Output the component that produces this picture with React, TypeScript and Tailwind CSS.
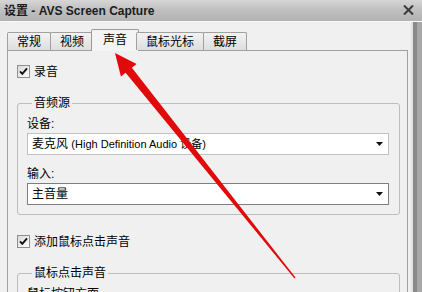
import React from "react";

const tabs = ["常规", "视频", "声音", "鼠标光标", "截屏"];

const CheckBox = () => (
  <span className="w-[13px] h-[13px] shrink-0 border border-[#8e8f8f] bg-[linear-gradient(135deg,#d9d9d9,#ffffff)] flex items-center justify-center">
    <svg width="11" height="11" viewBox="0 0 11 11">
      <path d="M2 5.3 L4.3 7.8 L9 2.4" fill="none" stroke="#111" strokeWidth="1.9" />
    </svg>
  </span>
);

const Select = ({ value, focused }: { value: React.ReactNode; focused?: boolean }) => (
  <div
    className={`h-[22px] bg-white border flex items-center pl-[4px] pr-[5px] ${
      focused ? "border-[#7e7e7e]" : "border-[#c2c2c2]"
    }`}
  >
    <span className="flex-1 whitespace-nowrap leading-[14px]">{value}</span>
    <svg width="7" height="4" viewBox="0 0 7 4">
      <path d="M0 0 H7 L3.5 4 Z" fill="#111" />
    </svg>
  </div>
);

const GroupBox = ({ title, children, className = "" }: { title: string; children: React.ReactNode; className?: string }) => (
  <fieldset className={`w-[383px] border border-[#bdbdbd] rounded-[3px] pl-[9px] pr-[10px] ${className}`}>
    <legend className="ml-[5px] px-[2px] leading-[14px]">{title}</legend>
    {children}
  </fieldset>
);

export default function App() {
  return (
    <div className="relative w-[422px] h-[292px] overflow-hidden bg-[#f0f0f0] text-[12px] text-black font-['Liberation_Sans','Noto_Sans_CJK_SC',sans-serif]">
      {/* title bar */}
      <div className="h-[21px] flex items-center justify-between pl-[4px] pr-[8px] bg-[linear-gradient(to_bottom,#d6d6d6,#c0c0c0_45%,#b2b2b2)]">
        <span className="font-bold text-[12px] text-[#1c1c1c] whitespace-nowrap">设置 - AVS Screen Capture</span>
        <svg width="11" height="10" viewBox="0 0 11 10" className="mt-[-1px]">
          <path d="M1 0.5 L10 9.5 M10 0.5 L1 9.5" stroke="#3a3a3a" strokeWidth="2" />
        </svg>
      </div>
      <div className="h-px bg-[#fafafa]" />

      <div className="flex h-[270px]">
        <div className="flex-1 flex flex-col pl-[7px] pr-[3px] pt-[7px]">
          {/* tabs */}
          <div className="relative z-10 flex items-end h-[21px]">
            {tabs.map((t, i) =>
              i === 2 ? (
                <div
                  key={t}
                  className="h-[22px] -mb-px -ml-[3px] -mr-[2px] px-[11px] border border-b-0 border-[#9a9a9a] rounded-t-[2px] bg-[#f4f4f4] flex items-start pt-[3px] leading-[14px]"
                >
                  {t}
                </div>
              ) : (
                <div
                  key={t}
                  className={`h-[18px] px-[9px] border border-b-0 border-[#a0a0a0] rounded-t-[2px] bg-[linear-gradient(to_bottom,#f2f2f2,#dedede)] flex items-center leading-[14px] ${
                    i > 0 ? "-ml-px" : ""
                  }`}
                >
                  {t}
                </div>
              )
            )}
          </div>

          {/* panel */}
          <div className="flex-1 border border-b-0 border-[#a0a0a0] bg-[#f0f0f0] pl-[9px]">
            <div className="mt-[14px] h-[13px] flex items-center gap-[4px]">
              <CheckBox />
              <span className="leading-[14px]">录音</span>
            </div>

            <GroupBox title="音频源" className="mt-[18px] pb-[9px]">
              <div className="mt-[7px] leading-[14px]">设备:</div>
              <div className="mt-[2px]">
                <Select
                  value={
                    <>
                      麦克风 <span className="text-[11px]">(High Definition Audio 设备)</span>
                    </>
                  }
                />
              </div>
              <div className="mt-[12px] leading-[14px]">输入:</div>
              <div className="mt-[2px]">
                <Select value="主音量" focused />
              </div>
            </GroupBox>

            <div className="mt-[20px] h-[13px] flex items-center gap-[4px]">
              <CheckBox />
              <span className="leading-[14px]">添加鼠标点击声音</span>
            </div>

            <GroupBox title="鼠标点击声音" className="mt-[18px] pb-[9px]">
              <div className="mt-[7px] leading-[14px]">鼠标按钮方面</div>
            </GroupBox>
          </div>
        </div>

        {/* window frame */}
        <div className="w-[11px] flex">
          <div className="w-[2px] bg-[#e2e2e2]" />
          <div className="w-[4px] bg-[#8a8a8a]" />
          <div className="flex-1 bg-[#a9a9a9]" />
        </div>
      </div>

      {/* red arrow overlay */}
      <svg className="absolute inset-0 pointer-events-none" width="422" height="292" viewBox="0 0 422 292">
        <polygon
          points="115,53 136.6,63.9 131.9,67.7 295.5,277.6 294.5,278.4 125.6,72.7 120.9,76.4"
          fill="#e00a0a"
        />
      </svg>
    </div>
  );
}
